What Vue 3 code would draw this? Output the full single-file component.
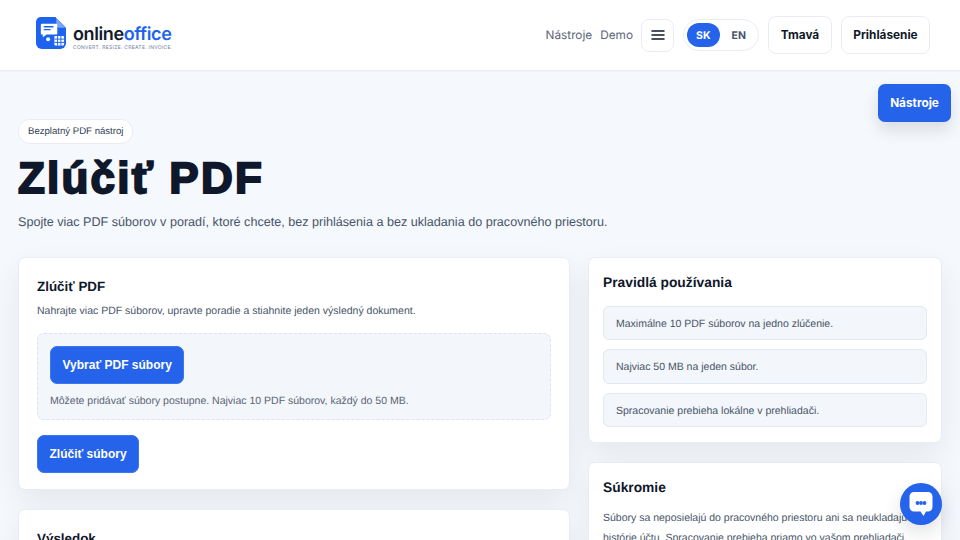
<script setup>
const rules = [
  'Maximálne 10 PDF súborov na jedno zlúčenie.',
  'Najviac 50 MB na jeden súbor.',
  'Spracovanie prebieha lokálne v prehliadači.'
]
</script>

<template>
  <div class="page">
    <!-- Header -->
    <header class="topbar">
      <a class="logo">
        <svg class="logo-mark" viewBox="0 0 31 33" width="30" height="32">
          <path d="M5 0H20L31 11V27a6 6 0 0 1-6 6H6a6 6 0 0 1-6-6V5a5 5 0 0 1 5-5z" fill="#1d63ed" />
          <path d="M21 1L30.500 11H24a3 3 0 0 1-3-3z" fill="#7ba6f5" />
          <path d="M6 7H21a1 1 0 0 1 1 1V17a1 1 0 0 1-1 1H11L7 21V18H6a1 1 0 0 1-1-1V8a1 1 0 0 1 1-1z" fill="#fff" />
          <path d="M8 10H18M8 13H15" stroke="#1d63ed" stroke-width="1.4" />
          <circle cx="12.500" cy="23" r="2" fill="#fff" />
          <rect x="19" y="19.500" width="10" height="10" rx="1" fill="#fff" />
          <path d="M22.300 19.500V29.500M25.700 19.500V29.500M19 22.800H29M19 26.200H29" stroke="#1d63ed" stroke-width="1" />
        </svg>
        <span class="logo-text">
          <span class="logo-name">online<b>office</b></span>
          <span class="logo-tag">CONVERT. RESIZE. CREATE. INVOICE.</span>
        </span>
      </a>
      <nav class="nav">
        <a class="nav-link">Nástroje</a>
        <a class="nav-link">Demo</a>
        <button class="menu-btn" aria-label="Menu">
          <svg width="14" height="10" viewBox="0 0 14 10">
            <path d="M1 1H13M1 5H13M1 9H13" stroke="#0f172a" stroke-width="1.500" stroke-linecap="round" />
          </svg>
        </button>
        <div class="lang">
          <span class="lang-item active">SK</span>
          <span class="lang-item">EN</span>
        </div>
        <button class="ghost-btn tmava">Tmavá</button>
        <button class="ghost-btn login">Prihlásenie</button>
      </nav>
    </header>

    <button class="float-tools">Nástroje</button>

    <main class="content">
      <section class="hero">
        <span class="pill">Bezplatný PDF nástroj</span>
        <h1>Zlúčiť PDF</h1>
        <p>Spojte viac PDF súborov v poradí, ktoré chcete, bez prihlásenia a bez ukladania do pracovného priestoru.</p>
      </section>

      <div class="columns">
        <div class="col">
          <section class="card main-card">
            <h2>Zlúčiť PDF</h2>
            <p class="desc">Nahrajte viac PDF súborov, upravte poradie a stiahnite jeden výsledný dokument.</p>
            <div class="dropzone">
              <button class="primary">Vybrať PDF súbory</button>
              <p class="hint">Môžete pridávať súbory postupne. Najviac 10 PDF súborov, každý do 50 MB.</p>
            </div>
            <button class="primary">Zlúčiť súbory</button>
          </section>
          <section class="card main-card">
            <h2>Výsledok</h2>
          </section>
        </div>

        <aside class="col">
          <section class="card side-card">
            <h3>Pravidlá používania</h3>
            <ul class="rules">
              <li v-for="rule in rules" :key="rule">{{ rule }}</li>
            </ul>
          </section>
          <section class="card side-card">
            <h3>Súkromie</h3>
            <p class="privacy">Súbory sa neposielajú do pracovného priestoru ani sa neukladajú do histórie účtu. Spracovanie prebieha priamo vo vašom prehliadači.</p>
          </section>
        </aside>
      </div>
    </main>

    <button class="chat" aria-label="Chat">
      <svg width="24" height="26" viewBox="0 0 24 26">
        <path d="M5 1H19a4.500 4.500 0 0 1 4.500 4.500V16a4.500 4.500 0 0 1-4.500 4.500H17L14.500 25 11.500 20.500H5A4.500 4.500 0 0 1 .5 16V5.500A4.500 4.500 0 0 1 5 1z" fill="#fff" />
        <circle cx="8.500" cy="12" r="1.900" fill="#2563eb" />
        <circle cx="12" cy="12" r="1.900" fill="#2563eb" />
        <circle cx="15.500" cy="12" r="1.900" fill="#2563eb" />
      </svg>
    </button>
  </div>
</template>

<style>
html, body {
  margin: 0;
  height: 100%;
  overflow: hidden;
}
</style>

<style scoped>
.page {
  position: relative;
  height: 100vh;
  overflow: hidden;
  background: #f5f8fc;
  font-family: "Liberation Sans", Arial, sans-serif;
  color: #0f172a;
  text-rendering: geometricPrecision;
}

.topbar {
  height: 71px;
  box-sizing: border-box;
  padding: 0 30px 0 36px;
  display: flex;
  align-items: center;
  justify-content: space-between;
  background: #fff;
  border-bottom: 1px solid #e9edf3;
  box-shadow: 0 1px 0 #f0f3f7;
}

.logo {
  display: flex;
  align-items: center;
  gap: 7px;
  margin-top: -4px;
}

.logo-text {
  display: flex;
  flex-direction: column;
  padding-top: 9px;
}

.logo-name {
  font-family: Inter, sans-serif;
  font-size: 18px;
  font-weight: 600;
  line-height: 20px;
  letter-spacing: -0.4px;
  color: #111a2e;
}

.logo-name b {
  font-weight: 600;
  color: #1d63ed;
}

.logo-tag {
  font-family: Inter, sans-serif;
  font-size: 5px;
  line-height: 6px;
  letter-spacing: 0.28px;
  color: #6b7a99;
}

.nav {
  display: flex;
  align-items: center;
  font-family: Inter, sans-serif;
}

.nav-link {
  font-size: 11.800px;
  color: #5b6478;
  margin-right: 8px;
}

.menu-btn {
  width: 33px;
  height: 33px;
  margin-right: 9px;
  padding: 0;
  display: flex;
  align-items: center;
  justify-content: center;
  background: #fff;
  border: 1px solid #e9edf3;
  border-radius: 8px;
}

.lang {
  width: 76px;
  height: 32px;
  box-sizing: border-box;
  padding: 3px;
  margin-right: 9px;
  display: flex;
  align-items: center;
  border: 1px solid #e9edf3;
  border-radius: 16px;
}

.lang-item {
  width: 33px;
  height: 24px;
  display: flex;
  align-items: center;
  justify-content: center;
  font-size: 10.500px;
  font-weight: 700;
  color: #475569;
  border-radius: 12px;
}

.lang-item.active {
  background: #2563eb;
  color: #fff;
}

.lang-item + .lang-item {
  margin-left: 3px;
}

.ghost-btn {
  height: 38px;
  padding: 0;
  font: 700 11.800px Inter, sans-serif;
  color: #111827;
  background: #fff;
  border: 1px solid #e9edf3;
  border-radius: 8px;
}

.tmava {
  width: 64px;
}

.login {
  width: 89px;
  margin-left: 9px;
}

.float-tools {
  position: absolute;
  top: 84px;
  right: 9px;
  width: 73px;
  height: 38px;
  padding: 0;
  font: 700 11.800px Inter, sans-serif;
  color: #fff;
  background: #2563eb;
  border: 0;
  border-radius: 7px;
  box-shadow: 0 8px 16px rgba(15, 23, 42, 0.12);
}

.content {
  padding: 48px 18px 0;
}

.hero {
  margin-bottom: 25px;
}

.pill {
  display: inline-block;
  padding: 0 9px;
  height: 23px;
  line-height: 23px;
  font-size: 9.600px;
  color: #334155;
  background: #fff;
  border: 1px solid #e9edf3;
  border-radius: 12px;
}

h1 {
  margin: 8px 0 6px;
  font-size: 44px;
  line-height: 54px;
  font-weight: 900;
  letter-spacing: 2.2px;
  color: #0f172a;
  -webkit-text-stroke: 2px #0f172a;
}

.hero p {
  margin: 0;
  font-size: 12.600px;
  line-height: 20px;
  color: #475569;
}

.columns {
  display: grid;
  grid-template-columns: minmax(0, 1fr) 354px;
  gap: 18px;
  align-items: start;
}

.col {
  display: flex;
  flex-direction: column;
  gap: 19px;
}

.card {
  background: #fff;
  border: 1px solid #e9edf3;
  border-radius: 7px;
  box-shadow: 0 12px 30px rgba(15, 23, 42, 0.07);
}

.main-card {
  padding: 19px 18px 16px;
}

.main-card h2 {
  margin: 0 0 6px;
  font-size: 13.400px;
  line-height: 20px;
}

.desc {
  margin: 0 0 14px;
  font-size: 10.500px;
  line-height: 16px;
  color: #475569;
}

.dropzone {
  padding: 12px 12px 10px;
  margin-bottom: 15px;
  background: #f3f6fa;
  border: 1px dashed #dde3ec;
  border-radius: 7px;
}

.primary {
  display: block;
  height: 38px;
  padding: 0 11.500px;
  font: 700 12px "Liberation Sans", Arial, sans-serif;
  color: #fff;
  background: #2563eb;
  border: 1px solid #3b77ee;
  border-radius: 7px;
}

.hint {
  margin: 9px 0 0;
  font-size: 10.500px;
  line-height: 16px;
  color: #5b6478;
}

.side-card {
  padding: 15px 14px;
}

.side-card h3 {
  margin: 0 0 13px;
  font-size: 13.800px;
  line-height: 20px;
}

.rules {
  margin: 0;
  padding: 0;
  list-style: none;
  display: flex;
  flex-direction: column;
  gap: 9px;
}

.rules li {
  height: 34.300px;
  box-sizing: border-box;
  padding: 0 12px;
  line-height: 34px;
  font-size: 10.500px;
  color: #475569;
  background: #f3f6fa;
  border: 1px solid #e2e8f0;
  border-radius: 6px;
}

.privacy {
  margin: -3px 0 0;
  font-size: 10.500px;
  line-height: 20px;
  color: #475569;
}

.chat {
  position: absolute;
  top: 483px;
  right: 18px;
  width: 42px;
  height: 42px;
  padding: 0;
  display: flex;
  align-items: center;
  justify-content: center;
  background: #2563eb;
  border: 0;
  border-radius: 50%;
  box-shadow: 0 8px 18px rgba(15, 23, 42, 0.12);
}
</style>
